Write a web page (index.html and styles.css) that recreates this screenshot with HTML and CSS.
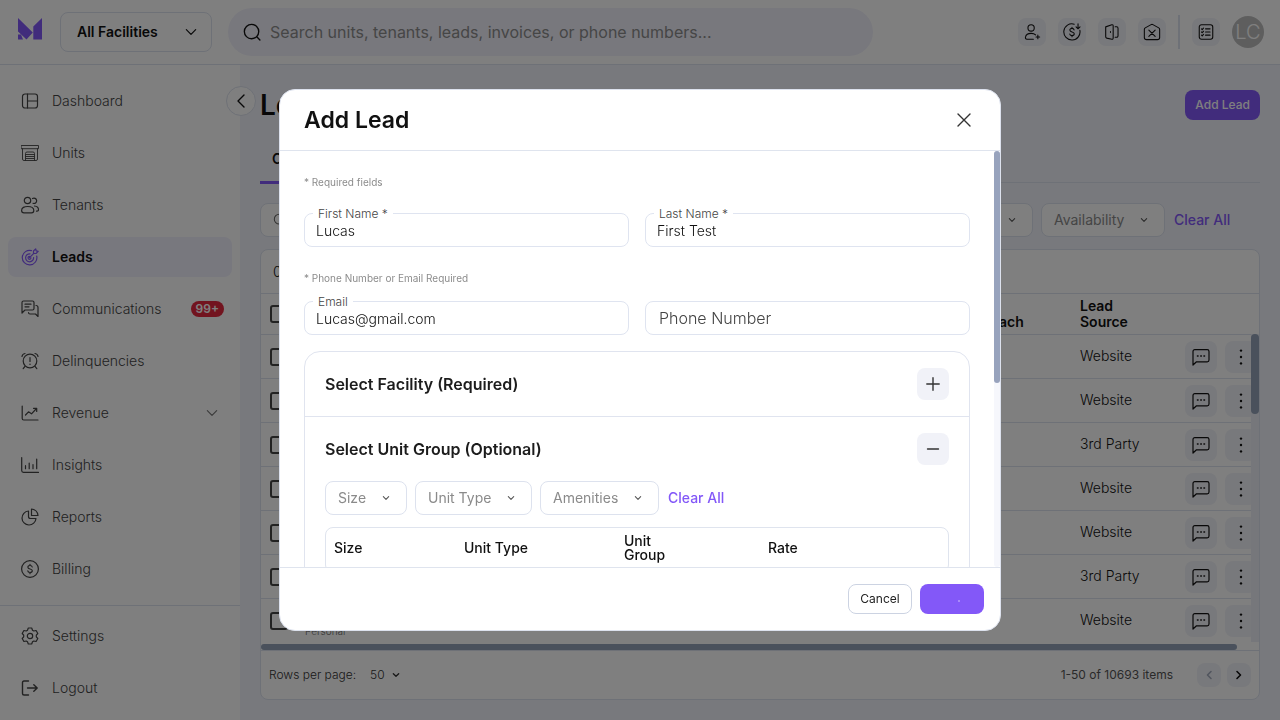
FILE: index.html
```html
<!DOCTYPE html>
<html lang="en">
<head>
<meta charset="utf-8">
<meta name="viewport" content="width=device-width, initial-scale=1">
<title>Leads</title>
<link rel="stylesheet" href="styles.css">
</head>
<body>
<svg class="sprite" aria-hidden="true">
  <symbol id="chevron-down" viewBox="0 0 12 12"><path d="M2 4 6 8 10 4"/></symbol>
  <symbol id="chat" viewBox="0 0 20 20"><path d="M2 18V4.5A1.8 1.8 0 0 1 3.800 2.700H16.200A1.800 1.800 0 0 1 18 4.500V13A1.800 1.800 0 0 1 16.200 14.800H5.500Z"/><path d="M6.500 9h.5M9.800 9h.5M13 9h.5" stroke-width="1.600"/></symbol>
  <symbol id="dots" viewBox="0 0 20 20"><g fill="currentColor" stroke="none"><circle cx="10" cy="3.600" r="1.200"/><circle cx="10" cy="10" r="1.200"/><circle cx="10" cy="16.400" r="1.200"/></g></symbol>
</svg>

<div class="app">
  <header class="topbar">
    <svg class="logo" viewBox="0 0 24 22" aria-label="Home"><path d="M0 0 14.800 14.500 8.500 21.500 0 13.500ZM24 0V21.500H15.300V8.500ZM0 16.500H3L5 21.500H0Z"/></svg>
    <span class="select-wrap facility">
      <select aria-label="Facility"><option>All Facilities</option></select>
      <svg class="icon"><use href="#chevron-down"/></svg>
    </span>
    <label class="search">
      <svg class="icon" viewBox="0 0 20 20"><circle cx="9.500" cy="9.500" r="8"/><path d="m15.300 15.300 3.500 3.500"/></svg>
      <input type="search" aria-label="Search" placeholder="Search units, tenants, leads, invoices, or phone numbers...">
    </label>
    <div class="top-actions">
      <button class="tool" aria-label="Add tenant"><svg class="icon" viewBox="0 0 20 20"><circle cx="9" cy="5.500" r="3.500"/><path d="M11.500 18H4.500C2.700 18 2.500 16.800 2.800 15.500 3.300 13 5.500 11.500 9 11.500 11 11.500 12.800 12 14 13.200M16.500 13.500v4M14.500 15.500h4"/></svg></button>
      <button class="tool" aria-label="Payments"><svg class="icon" viewBox="0 0 20 20"><path d="M12.500 1.300A9 9 0 1 0 18.700 8M16.700 1v5M14.500 4.200l2.200 2.200 2.200-2.200M12.300 7.700C12 6.500 11.200 6 10 6 8.500 6 7.600 6.800 7.600 7.900 7.600 10.600 12.500 9.200 12.500 12 12.500 13.300 11.500 14 10 14S7.600 13.300 7.500 12.200M10 4.700V6M10 14v1.300"/></svg></button>
      <button class="tool" aria-label="Move in"><svg class="icon" viewBox="0 0 20 20"><path d="M3 4.300 9.800 2Q11.300 1.700 11.300 3.200V16.800Q11.300 18.300 9.800 18L4.200 16.800Q3 16.500 3 15.200ZM13.500 4.200h1.700a1.500 1.500 0 0 1 1.500 1.500v8.600a1.500 1.500 0 0 1-1.500 1.500h-1.700M8.300 9.600v.8"/></svg></button>
      <button class="tool" aria-label="Move out"><svg class="icon" viewBox="0 0 20 20"><path d="M1.500 7.200Q1.500 6 2.500 5.400L9 1.800Q10 1.300 11 1.800L17.500 5.400Q18.500 6 18.500 7.200V16Q18.500 18.500 16 18.500H4Q1.500 18.500 1.500 16ZM6.500 7.800l7 7M13.500 7.800l-7 7"/></svg></button>
      <span class="divider"></span>
      <button class="tool" aria-label="Tasks"><svg class="icon" viewBox="0 0 20 20"><rect x="2.500" y="2" width="15" height="16" rx="2.500"/><path d="M9.500 6.500h5M9.500 10h5M9.500 13.500h5M5 6.500l.8.800 1.400-1.600M5 10l.8.800 1.400-1.600M5 13.500l.8.800 1.400-1.600"/></svg></button>
      <button class="avatar" aria-label="Account">LC</button>
    </div>
  </header>

  <aside class="sidebar">
    <nav class="nav">
      <a href="#"><svg class="icon" viewBox="0 0 18 18"><rect x="1.500" y="2" width="15" height="14" rx="2.500"/><path d="M6.500 2v14M6.500 9h10"/></svg>Dashboard</a>
      <a href="#"><svg class="icon" viewBox="0 0 18 18"><path d="M.5 1.500h17v3.200H.5ZM1.500 4.700V15q0 1.500 1.500 1.500h12q1.500 0 1.500-1.500V4.700M4.500 16.500V9.500Q4.500 8 6 8h6q1.500 0 1.500 1.500v7M5 10.500h8M5 12.500h8M5 14.500h8" stroke-width=".9"/></svg>Units</a>
      <a href="#"><svg class="icon" viewBox="0 0 18 18"><circle cx="6.500" cy="4.500" r="3.200"/><path d="M3 16.800h7.500q2.300 0 2.300-2.300C12.800 11.500 10 10.500 6.700 10.500S.6 11.500.6 14.500q0 2.300 2.400 2.300ZM11.500 2.500a2.700 2.700 0 1 1 .5 4.800M13.500 10c2.500.3 4 1.700 4 3.700q0 1.500-2 1.500"/></svg>Tenants</a>
      <a href="#" class="active" aria-current="page"><svg class="icon" viewBox="0 0 18 18"><path d="M10.500 2.600A7.300 7.300 0 1 0 15.700 8M9 5.800a4 4 0 1 0 3.600 3.700M8.500 9.700 13 5.200M12.500 5.500V3l2.200-2.200.5 2 2 .5L15 5.500ZM8.500 8.300a1.500 1.500 0 1 0 1.500 1.500"/></svg>Leads</a>
      <a href="#"><svg class="icon" viewBox="0 0 18 18"><path d="M1 13V2.500Q1 1 2.500 1h9Q13 1 13 2.500v6Q13 10 11.500 10H4ZM4 4.200h6M4 6.800h4M15 5.500q2 0 2 2V16.500L14.500 14H9q-1.500 0-1.500-1.500"/></svg>Communications<span class="badge">99+</span></a>
      <a href="#"><svg class="icon" viewBox="0 0 18 18"><circle cx="9" cy="9" r="6.800"/><path d="M9 5.500v4M9 12v.4M1 4.500Q1.300 2 4 1.500M17 4.500Q16.700 2 14 1.500M4 14.300 2.200 16.700M14 14.300l1.800 2.400"/></svg>Delinquencies</a>
      <a href="#"><svg class="icon" viewBox="0 0 18 18"><path d="M1.200 2v12.500q0 1.500 1.500 1.500H17M4.500 11l3-3.200 3 2L15.500 4.500M12.500 4.300h3.200v3.200"/></svg>Revenue<svg class="icon caret"><use href="#chevron-down"/></svg></a>
      <a href="#"><svg class="icon" viewBox="0 0 18 18"><path d="M.7 1.500V14.500Q.7 16.300 2.500 16.300h15M4.500 12.700v-3M8.200 12.700V7M12 12.700V8.500M15.700 12.700V3"/></svg>Insights</a>
      <a href="#"><svg class="icon" viewBox="0 0 18 18"><path d="M7.500 3A7 7 0 1 0 15 10.500M7.500 3v5.500q0 2 2 2H15M10.500 1v6.500H17Q16.500 1.800 10.500 1Z"/></svg>Reports</a>
      <a href="#"><svg class="icon" viewBox="0 0 18 18"><circle cx="9" cy="9" r="8.400"/><path d="M11.200 7C11 6 10.200 5.500 9 5.500 7.700 5.500 6.900 6.200 6.900 7.200 6.900 9.600 11.300 8.400 11.300 10.800 11.300 11.900 10.400 12.500 9 12.500S6.900 11.900 6.800 10.900M9 4.300v1.200M9 12.500v1.200"/></svg>Billing</a>
    </nav>
    <nav class="nav nav-end">
      <a href="#"><svg class="icon" viewBox="0 0 18 18"><circle cx="9" cy="9" r="2.700"/><path d="M7.300 1h3.400l.8 2.200 1.300.8 2.300-.5 1.700 3-1.500 1.700v1.600l1.500 1.700-1.700 3-2.300-.5-1.300.8-.8 2.200H7.300l-.8-2.200-1.300-.8-2.300.5-1.700-3 1.500-1.700V8.200L1.200 6.500l1.700-3 2.300.5 1.300-.8Z"/></svg>Settings</a>
      <a href="#"><svg class="icon" viewBox="0 0 18 18"><path d="M7.500 2H3Q1.500 2 1.500 3.500v11Q1.500 16 3 16h4.500M6.500 9h9.500M12.800 5.700 16.200 9l-3.400 3.300" stroke-width="1.400"/></svg>Logout</a>
    </nav>
    <button class="collapse" aria-label="Collapse menu"><svg class="icon" viewBox="0 0 16 16"><path d="M11 2 5 8l6 6"/></svg></button>
  </aside>

  <main class="main">
    <div class="page-head"><h1>Leads</h1><button class="primary">Add Lead</button></div>
    <div class="tabs"><button class="tab">Current</button></div>
    <div class="filters">
      <label class="filter-search">
        <svg class="icon" viewBox="0 0 16 16"><circle cx="7" cy="7" r="5.500"/><path d="m11 11 3.500 3.500"/></svg>
        <input type="search" aria-label="Search leads">
      </label>
      <span class="select-wrap chip"><select aria-label="Source"><option>Source</option></select><svg class="icon"><use href="#chevron-down"/></svg></span>
      <span class="select-wrap chip"><select aria-label="Availability"><option>Availability</option></select><svg class="icon"><use href="#chevron-down"/></svg></span>
      <button class="clear">Clear All</button>
    </div>
    <section class="card">
      <div class="card-tools">0 Selected</div>
      <div class="table-wrap">
        <table class="leads">
          <colgroup><col class="c-check"><col><col class="c-outreach"><col class="c-source"><col class="c-actions"></colgroup>
          <thead><tr><th><input type="checkbox" aria-label="Select all"></th><th>Name</th><th>Last<br>Outreach</th><th>Lead<br>Source</th><th></th></tr></thead>
          <tbody>
            <tr><td><input type="checkbox" aria-label="Select lead"></td><td></td><td></td><td class="source">Website</td><td><span class="row-actions"><button aria-label="Message"><svg class="icon"><use href="#chat"/></svg></button><button aria-label="More"><svg class="icon"><use href="#dots"/></svg></button></span></td></tr>
            <tr><td><input type="checkbox" aria-label="Select lead"></td><td></td><td></td><td class="source">Website</td><td><span class="row-actions"><button aria-label="Message"><svg class="icon"><use href="#chat"/></svg></button><button aria-label="More"><svg class="icon"><use href="#dots"/></svg></button></span></td></tr>
            <tr><td><input type="checkbox" aria-label="Select lead"></td><td></td><td></td><td class="source">3rd Party</td><td><span class="row-actions"><button aria-label="Message"><svg class="icon"><use href="#chat"/></svg></button><button aria-label="More"><svg class="icon"><use href="#dots"/></svg></button></span></td></tr>
            <tr><td><input type="checkbox" aria-label="Select lead"></td><td></td><td></td><td class="source">Website</td><td><span class="row-actions"><button aria-label="Message"><svg class="icon"><use href="#chat"/></svg></button><button aria-label="More"><svg class="icon"><use href="#dots"/></svg></button></span></td></tr>
            <tr><td><input type="checkbox" aria-label="Select lead"></td><td></td><td></td><td class="source">Website</td><td><span class="row-actions"><button aria-label="Message"><svg class="icon"><use href="#chat"/></svg></button><button aria-label="More"><svg class="icon"><use href="#dots"/></svg></button></span></td></tr>
            <tr><td><input type="checkbox" aria-label="Select lead"></td><td></td><td></td><td class="source">3rd Party</td><td><span class="row-actions"><button aria-label="Message"><svg class="icon"><use href="#chat"/></svg></button><button aria-label="More"><svg class="icon"><use href="#dots"/></svg></button></span></td></tr>
            <tr><td><input type="checkbox" aria-label="Select lead"></td><td class="kind">Personal</td><td></td><td class="source">Website</td><td><span class="row-actions"><button aria-label="Message"><svg class="icon"><use href="#chat"/></svg></button><button aria-label="More"><svg class="icon"><use href="#dots"/></svg></button></span></td></tr>
          </tbody>
        </table>
        <div class="vscroll"><div></div></div>
      </div>
      <div class="hscroll"><div></div></div>
      <footer class="pager">
        <span>Rows per page:</span>
        <span class="select-wrap page-size"><select aria-label="Rows per page"><option>50</option></select><svg class="icon"><use href="#chevron-down"/></svg></span>
        <span class="range">1-50 of 10693 items</span>
        <button disabled aria-label="Previous page"><svg class="icon" viewBox="0 0 12 12"><path d="M8 2.500 4.500 6 8 9.500"/></svg></button>
        <button aria-label="Next page"><svg class="icon" viewBox="0 0 12 12"><path d="M4 2.500 7.500 6 4 9.500"/></svg></button>
      </footer>
    </section>
  </main>
</div>

<div class="overlay">
  <div class="modal" role="dialog" aria-modal="true" aria-labelledby="modal-title">
    <header class="modal-head">
      <h2 id="modal-title">Add Lead</h2>
      <button class="close" aria-label="Close"><svg class="icon" viewBox="0 0 16 16"><path d="m2 2 12 12M14 2 2 14"/></svg></button>
    </header>
    <div class="modal-body">
      <form class="form" id="lead-form">
        <p class="hint">* Required fields</p>
        <div class="pair">
          <div class="field"><input id="first" type="text" value="Lucas"><label for="first">First Name *</label></div>
          <div class="field"><input id="last" type="text" value="First Test"><label for="last">Last Name *</label></div>
        </div>
        <p class="hint hint-contact">* Phone Number or Email Required</p>
        <div class="pair">
          <div class="field"><input id="email" type="email" value="Lucas@gmail.com"><label for="email">Email</label></div>
          <div class="field empty"><input type="tel" aria-label="Phone Number" placeholder="Phone Number"></div>
        </div>
        <div class="accordion">
          <section>
            <div class="acc-head"><h3>Select Facility (Required)</h3><button type="button" aria-label="Expand"><svg class="icon" viewBox="0 0 14 14"><path d="M7 .8v12.400M.8 7h12.400"/></svg></button></div>
          </section>
          <section>
            <div class="acc-head"><h3>Select Unit Group (Optional)</h3><button type="button" aria-label="Collapse"><svg class="icon" viewBox="0 0 14 14"><path d="M1.500 7h11"/></svg></button></div>
            <div class="acc-body">
              <div class="filters">
                <span class="select-wrap chip"><select aria-label="Size"><option>Size</option></select><svg class="icon"><use href="#chevron-down"/></svg></span>
                <span class="select-wrap chip"><select aria-label="Unit Type"><option>Unit Type</option></select><svg class="icon"><use href="#chevron-down"/></svg></span>
                <span class="select-wrap chip"><select aria-label="Amenities"><option>Amenities</option></select><svg class="icon"><use href="#chevron-down"/></svg></span>
                <button class="clear" type="button">Clear All</button>
              </div>
              <div class="units-box">
                <table class="units">
                  <colgroup><col class="u-size"><col class="u-type"><col class="u-group"><col></colgroup>
                  <thead><tr><th>Size</th><th>Unit Type</th><th>Unit<br>Group</th><th>Rate</th></tr></thead>
                </table>
              </div>
            </div>
          </section>
        </div>
      </form>
      <div class="modal-scroll"><div></div></div>
    </div>
    <footer class="modal-foot">
      <button class="secondary">Cancel</button>
      <button class="primary loading" form="lead-form" aria-label="Saving"><span></span></button>
    </footer>
  </div>
</div>
</body>
</html>
```

FILE: styles.css
```css
* { box-sizing: border-box; }

body {
  margin: 0;
  font-family: Inter, "Liberation Sans", sans-serif;
  font-size: 14px;
  line-height: 16px;
  color: #111;
  background: #f1f3fb;
}

h1, h2, h3, p { margin: 0; }
button, input, select { font: inherit; color: inherit; }
button { border: 0; padding: 0; background: none; display: inline-flex; align-items: center; justify-content: center; }
a { color: inherit; text-decoration: none; }
input[type="search"] { appearance: none; border: 0; background: none; outline: 0; padding: 0; min-width: 0; }

.sprite { display: none; }
.icon { width: 18px; height: 18px; flex: none; fill: none; stroke: currentColor; stroke-width: 1.2; stroke-linecap: round; stroke-linejoin: round; }

.select-wrap { display: inline-grid; align-items: center; flex: none; }
.select-wrap > * { grid-area: 1 / 1; }
.select-wrap select { appearance: none; border: 0; background: none; outline: 0; padding: 0; height: 100%; width: 100%; opacity: 1; }
.select-wrap .icon { justify-self: end; pointer-events: none; }

.app { height: 100vh; display: grid; grid-template: auto minmax(0, 1fr) / 240px minmax(0, 1fr); overflow: hidden; }

/* Top bar */
.topbar { grid-column: 1 / -1; display: flex; align-items: center; gap: 16px; height: 65px; padding: 0 16px 1px 18px; background: #fff; border-bottom: 1px solid #dde2ee; }
.logo { width: 24px; height: 22px; fill: #8358f8; margin-bottom: 5px; }
.facility { width: 152px; height: 40px; border: 1px solid #dde2ee; border-radius: 8px; margin-left: 2px; font-weight: 600; }
.facility select { padding-left: 16px; }
.facility .icon { width: 14px; height: 14px; margin-right: 13px; stroke-width: 1; }
.search { display: flex; align-items: center; gap: 9px; flex: 0 1 645px; height: 48px; padding: 0 15px; border-radius: 24px; background: #f1f1fb; }
.search .icon { width: 18px; height: 18px; stroke-width: 1.5; }
.search input { flex: 1; font-size: 16px; line-height: 20px; }
.search input::placeholder { color: #8c8c8c; }
.top-actions { display: flex; align-items: center; gap: 12px; margin-left: auto; }
.tool { width: 28px; height: 28px; border-radius: 8px; background: #f1f2f8; }
.divider { width: 2px; height: 34px; background: #dde2ee; }
.avatar { width: 32px; height: 32px; border-radius: 50%; background: #bdbdbd; color: #fff; font-size: 20px; font-weight: 300; }

/* Sidebar */
.sidebar { position: relative; background: #fff; }
.nav { display: flex; flex-direction: column; gap: 12px; padding: 16px 8px; }
.nav a { display: flex; align-items: center; gap: 13px; height: 40px; padding: 0 13px; border-radius: 8px; color: #444; font-weight: 300; }
.nav .active { background: #f1f0fd; color: #111; font-weight: 600; }
.nav .active .icon { color: #8358f8; }
.nav .caret { width: 14px; height: 14px; margin-left: auto; stroke-width: 1; color: #777; }
.nav-end { border-top: 1px solid #dde2ee; padding-top: 10px; }
.badge { margin-left: auto; margin-right: -5px; padding: 0 5px; border-radius: 8px; background: #e5283e; color: #fff; font-size: 12px; line-height: 16px; font-weight: 600; }
.collapse { position: absolute; top: 21px; right: -16px; width: 30px; height: 30px; border: 1px solid #dde2ee; border-radius: 50%; background: #fff; }
.collapse .icon { width: 16px; height: 16px; stroke-width: 1.4; }

/* Main */
.main { display: flex; flex-direction: column; padding: 20px; min-width: 0; }
.page-head { display: flex; align-items: center; justify-content: space-between; height: 40px; }
.page-head h1 { font-size: 28px; font-weight: 600; line-height: 32px; }
.primary { height: 30px; padding: 0 10px; border-radius: 8px; background: #8358f8; color: #fff; font-size: 12px; font-weight: 500; }
.tabs { display: flex; height: 50px; margin-top: 8px; border-bottom: 1px solid #dde2ee; }
.tab { height: 51px; padding: 3px 12px 0; border-bottom: 3px solid #8358f8; font-weight: 600; }
.filters { display: flex; gap: 8px; }
.main > .filters { margin: 20px 0 12px; }
.filter-search { display: flex; align-items: center; gap: 8px; flex: 1; min-width: 0; height: 34px; padding: 0 12px; border: 1px solid #dde2ee; border-radius: 8px; background: #fff; }
.filter-search .icon { width: 14px; height: 14px; color: #666; }
.filter-search input { width: 0; flex: 1; }
.chip { height: 34px; border: 1px solid #dde2ee; border-radius: 8px; background: #fff; color: #8a8a8a; }
.chip select { padding: 0 39px 0 12px; }
.chip .icon { width: 8px; height: 8px; margin-right: 16px; stroke-width: 1.6; color: #555; }
.clear { color: #8358f8; padding: 0 1px; font-weight: 500; }
.main .clear { min-width: 87px; justify-content: flex-start; }

.card { display: flex; flex-direction: column; flex: 1; min-height: 0; border: 1px solid #dde2ee; border-radius: 8px; background: #fff; overflow: hidden; }
.card-tools { height: 44px; padding: 0 12px; border-bottom: 1px solid #dde2ee; line-height: 43px; font-weight: 300; flex: none; }
.table-wrap { position: relative; flex: 1; min-height: 0; overflow: hidden; }
.leads { width: 100%; table-layout: fixed; border-collapse: separate; border-spacing: 0; }
.leads th, .leads td { height: 44px; padding: 0 8px; border-bottom: 1px solid #dde2ee; text-align: left; line-height: 16px; font-weight: 300; }
.leads th { height: 41px; font-weight: 600; }
.leads td.source { padding-bottom: 2px; }
.leads td.kind { vertical-align: bottom; padding-bottom: 3px; font-size: 10px; color: #666; }
.c-check { width: 36px; }
.c-outreach { width: 119px; }
.c-source { width: 105px; }
.c-actions { width: 82px; }
.leads input { display: block; appearance: none; width: 18px; height: 18px; margin: 0 0 0 1px; border: 2px solid #444; border-radius: 3px; background: #fff; }
.row-actions { display: flex; gap: 8px; }
.row-actions button { width: 32px; height: 32px; border-radius: 8px; background: #f1f2f8; flex: none; }
.row-actions .icon { width: 20px; height: 20px; }
.vscroll { position: absolute; top: 40px; right: 0; bottom: 0; width: 8px; background: #eceef6; }
.vscroll div { height: 80px; border-radius: 4px; background: #94a3b8; }
.hscroll { height: 8px; padding: 2px 8px 0 0; flex: none; }
.hscroll div { height: 6px; margin-right: 14px; border-radius: 3px; background: #94a3b8; }
.pager { display: flex; align-items: center; height: 49px; padding: 0 8px; border-top: 1px solid #dde2ee; font-size: 12px; font-weight: 300; flex: none; }
.pager > span { color: #333; }
.page-size { width: 30px; margin-left: 14px; }
.page-size .icon { width: 8px; height: 8px; stroke-width: 2; }
.range { margin-left: auto; margin-right: 24px; font-weight: 400; }
.pager .range { color: #555; }
.pager button { width: 24px; height: 24px; margin-right: 6px; border-radius: 8px; background: #f1f2f8; }
.pager button + button { margin-right: 0; }
.pager button .icon { width: 12px; height: 12px; stroke-width: 1.6; }
.pager button:disabled { color: #a3acbd; }

/* Dialog */
.overlay { position: fixed; inset: 0; display: flex; align-items: center; justify-content: center; background: rgba(0, 0, 0, 0.5); }
.modal { width: 722px; max-width: calc(100vw - 32px); border: 1px solid #dde2ee; border-radius: 16px; background: #fff; overflow: hidden; }
.modal-head { display: flex; align-items: center; justify-content: space-between; height: 61px; padding: 0 28px 0 24px; border-bottom: 1px solid #dfe4ee; }
.modal-head h2 { font-size: 23px; line-height: 28px; font-weight: 600; }
.close .icon { width: 16px; height: 16px; color: #333; stroke-width: 1.4; }
.modal-body { display: flex; max-height: calc(100vh - 304px); overflow: hidden; }
.form { flex: 1; min-width: 0; padding: 24px; }
.modal-scroll { width: 6px; background: #f6f7fc; border-radius: 3px; }
.modal-scroll div { height: 232px; border-radius: 3px; background: #98a3bd; }
.hint { font-size: 10px; line-height: 14px; margin-bottom: 24px; color: #8c8c8c; }
.hint-contact { margin: 24px 0 16px; }
.pair { display: grid; grid-template-columns: 1fr 1fr; gap: 16px; }
.field { position: relative; }
.field input { display: block; width: 100%; height: 34px; padding: 1px 11px 0; border: 1px solid #dfe4f0; border-radius: 8px; background: #fff; outline: 0; font-weight: 300; }
.field label { position: absolute; top: -7px; left: 9px; padding: 0 5px; background: #fff; font-size: 12px; line-height: 16px; font-weight: 300; color: #444; }
.field.empty input { padding: 0 13px; font-size: 16px; line-height: 20px; }
.field.empty input::placeholder { color: #444; }
.accordion { margin-top: 16px; border: 1px solid #e0e4ef; border-radius: 16px; }
.accordion section + section { border-top: 1px solid #e0e4ef; }
.acc-head { display: flex; align-items: center; justify-content: space-between; padding: 16px 20px; }
.acc-head h3 { font-size: 16px; line-height: 20px; font-weight: 600; color: #1c1c1c; }
.acc-head button { width: 32px; height: 32px; border-radius: 8px; background: #f1f2f8; }
.acc-head .icon { width: 14px; height: 14px; color: #333; stroke-width: 1.4; }
.acc-body { padding: 0 20px 20px; }
.units-box { margin-top: 12px; border: 1px solid #dfe4ee; border-radius: 8px; }
.units { width: 100%; table-layout: fixed; border-collapse: collapse; }
.units th { height: 44px; padding: 0 8px 4px; text-align: left; line-height: 14px; font-weight: 500; }
.u-size { width: 130px; }
.u-type { width: 160px; }
.u-group { width: 144px; }
.modal-foot { display: flex; justify-content: flex-end; gap: 8px; padding: 16px; border-top: 1px solid #dfe4ee; }
.modal-foot button { width: 64px; height: 30px; border-radius: 8px; }
.secondary { border: 1px solid #ccd3e2; font-size: 12px; color: #222; }
.loading span { width: 2px; height: 2px; margin-left: 14px; margin-top: 4px; border-radius: 50%; background: #b49cfa; }
```
